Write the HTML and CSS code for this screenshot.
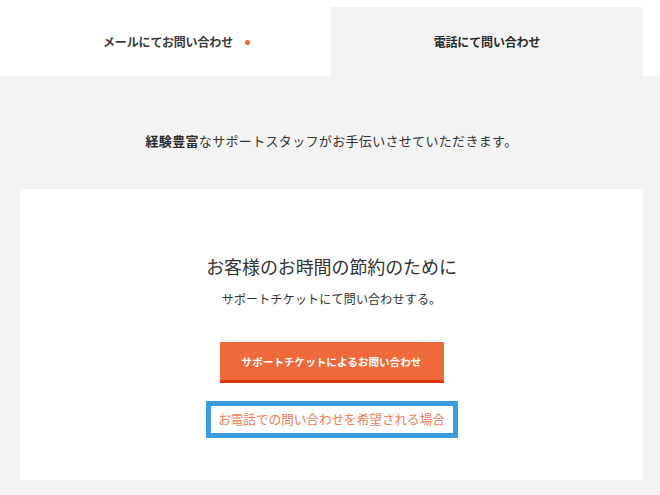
FILE: index.html
```html
<!DOCTYPE html>
<html lang="ja">
<head>
<meta charset="utf-8">
<link rel="stylesheet" href="styles.css">
</head>
<body>
<div class="tabs">
  <div class="tab tab-active"><span class="tab-label">メールにてお問い合わせ<span class="dot"></span></span></div>
  <div class="tab tab-inactive"><span class="tab-label">電話にて問い合わせ</span></div>
  <div class="tab-rest"></div>
</div>
<main class="panel">
  <p class="lead"><strong class="lead-strong">経験豊富</strong>なサポートスタッフがお手伝いさせていただきます。</p>
  <section class="card">
    <h2 class="card-title">お客様のお時間の節約のために</h2>
    <p class="card-sub">サポートチケットにて問い合わせする。</p>
    <a class="btn" href="#">サポートチケットによるお問い合わせ</a>
    <a class="phone-link" href="#">お電話での問い合わせを希望される場合</a>
  </section>
</main>
</body>
</html>
```

FILE: styles.css
```css
html, body {
  margin: 0;
  padding: 0;
}
body {
  background: #f3f3f3;
  font-family: "Noto Sans CJK JP", "Noto Sans", sans-serif;
  color: #333;
  width: 660px;
  height: 495px;
  overflow: hidden;
}
.tabs {
  display: flex;
  height: 76px;
  background: #fff;
}
.tab {
  display: flex;
  align-items: center;
  justify-content: center;
  font-size: 12px;
  font-weight: 700;
  color: #3a3a3a;
  letter-spacing: -0.15px;
}
.tab-label {
  position: relative;
}
.tab-active {
  width: 331px;
  background: #fff;
  padding: 7px 0 0 5px;
  box-sizing: border-box;
}
.tab-inactive {
  width: 312px;
  margin-top: 7px;
  background: #f3f3f3;
  color: #2a2a2a;
}
.tab-rest {
  flex: 1;
}
.dot {
  position: absolute;
  right: -17px;
  top: 50%;
  margin-top: -2px;
  width: 5px;
  height: 5px;
  border-radius: 50%;
  background: #ee6a3a;
}
.panel {
  padding: 0 17px 0 20px;
}
.lead {
  margin: 55px 0 38px;
  font-size: 13px;
  line-height: 20px;
  letter-spacing: 0.33px;
  text-align: center;
  color: #333;
}
.lead-strong {
  font-weight: 700;
  color: #2a2a2a;
}
.card {
  background: #fff;
  height: 291px;
  box-sizing: border-box;
  padding-top: 64px;
  display: flex;
  flex-direction: column;
  align-items: center;
}
.card-title {
  margin: 0;
  font-size: 18px;
  line-height: 26px;
  font-weight: 400;
  letter-spacing: -0.1px;
  color: #333;
}
.card-sub {
  margin: 10px 0 0;
  font-size: 12px;
  line-height: 20px;
  letter-spacing: 0.2px;
  color: #333;
}
.btn {
  margin-top: 33px;
  width: 224px;
  height: 38px;
  border-bottom: 3px solid #e2320c;
  background: #ef693b;
  color: #fff;
  font-size: 10.6px;
  font-weight: 700;
  text-decoration: none;
  display: flex;
  align-items: center;
  justify-content: center;
  letter-spacing: 0;
}
.phone-link {
  margin-top: 18px;
  width: 252px;
  height: 37px;
  box-sizing: border-box;
  border: 5px solid #3a9de0;
  display: flex;
  align-items: center;
  justify-content: center;
  color: #f07c5c;
  font-size: 12.6px;
  text-decoration: none;
  padding-bottom: 3px;
}
```
